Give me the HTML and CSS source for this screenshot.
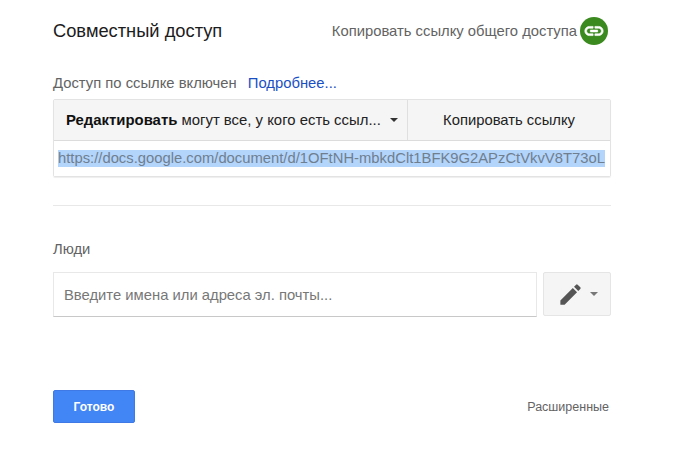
FILE: index.html
```html
<!DOCTYPE html>
<html lang="ru">
<head>
<meta charset="utf-8">
<title>Совместный доступ</title>
<link rel="stylesheet" href="styles.css">
</head>
<body>
<main class="dialog">
  <header class="head">
    <h1 class="title">Совместный доступ</h1>
    <div class="share">
      <span class="share-text">Копировать ссылку общего доступа</span>
      <span class="share-icon">
        <svg viewBox="0 0 24 24" width="22" height="22"><path fill="#fff" stroke="#fff" stroke-width="0.7" d="M3.9 12c0-1.71 1.39-3.1 3.1-3.1h4V7H7c-2.76 0-5 2.24-5 5s2.24 5 5 5h4v-1.9H7c-1.71 0-3.1-1.39-3.1-3.1zM8 13h8v-2H8v2zm9-6h-4v1.9h4c1.71 0 3.1 1.39 3.1 3.1s-1.39 3.1-3.1 3.1h-4V17h4c2.76 0 5-2.24 5-5s-2.24-5-5-5z"/></svg>
      </span>
    </div>
  </header>

  <p class="status">Доступ по ссылке включен <a class="more" href="#">Подробнее...</a></p>

  <section class="linkbox">
    <div class="linkrow">
      <div class="perm">
        <span class="perm-text"><b>Редактировать</b> могут все, у кого есть ссыл...</span>
        <span class="caret caret-dark"></span>
      </div>
      <div class="copy">Копировать ссылку</div>
    </div>
    <div class="urlrow"><span class="url">https://docs.google.com/document/d/1OFtNH-mbkdClt1BFK9G2APzCtVkvV8T73oL</span></div>
  </section>

  <hr class="rule">

  <h2 class="people">Люди</h2>
  <div class="invite">
    <div class="email">Введите имена или адреса эл. почты...</div>
    <div class="role">
      <svg viewBox="0 0 24 24" width="27" height="27"><path fill="#555" d="M3 17.25V21h3.75L17.81 9.94l-3.75-3.75L3 17.25zM20.71 7.04a1 1 0 0 0 0-1.41l-2.34-2.34a1 1 0 0 0-1.41 0l-1.83 1.83 3.75 3.75 1.83-1.83z"/></svg>
      <span class="caret caret-gray"></span>
    </div>
  </div>

  <footer class="foot">
    <button class="done" type="button">Готово</button>
    <span class="advanced">Расширенные</span>
  </footer>
</main>
</body>
</html>
```

FILE: styles.css
```css
* { box-sizing: border-box; }
html, body { margin: 0; padding: 0; background: #fff; }
body { width: 695px; height: 462px; overflow: hidden; font-family: "Liberation Sans", Arial, sans-serif; }
.dialog { width: 558px; margin-left: 53px; padding-top: 17px; display: flex; flex-direction: column; }
.head { display: flex; justify-content: space-between; align-items: center; height: 28px; }
.title { margin: 0; font-size: 18.3px; font-weight: 400; color: #1c1c1c; }
.share { display: flex; align-items: center; gap: 3px; margin-right: 3px; }
.share-text { font-size: 14.8px; color: #636363; }
.share-icon { width: 28px; height: 28px; border-radius: 50%; background: #3b8a1f; display: flex; align-items: center; justify-content: center; }
.status { margin: 30px 0 0; height: 17px; line-height: 17px; font-size: 14.8px; color: #636363; }
.more { color: #1a4fc4; text-decoration: none; margin-left: 7px; }
.linkbox { margin-top: 7px; border: 1px solid #e3e3e3; border-radius: 2px; box-shadow: 0 1px 1px #eee; }
.linkrow { display: flex; height: 41px; border-bottom: 1px solid #dcdcdc; background: #f5f5f5; }
.perm { width: 354px; display: flex; align-items: center; padding-left: 12px; border-right: 1px solid #dfdfdf; }
.perm-text { font-size: 14.9px; color: #222; white-space: nowrap; }
.perm-text b { color: #111; }
.caret { display: inline-block; width: 0; height: 0; border-left: 4px solid transparent; border-right: 4px solid transparent; }
.caret-dark { border-top: 4px solid #333; margin-left: 9px; }
.caret-gray { border-top: 4px solid #777; margin-left: 6px; }
.copy { flex: 1; display: flex; align-items: center; justify-content: center; font-size: 14.8px; color: #222; }
.urlrow { height: 35px; padding: 9px 0 0 4px; background: #fff; }
.url { display: inline-block; height: 17px; line-height: 17px; max-width: 548px; overflow: hidden; white-space: nowrap; font-size: 14.8px; color: #6f7f8f; background: #b3d4fb; }
.rule { margin: 28px 0 0; border: 0; border-top: 1px solid #e8e8e8; }
.people { margin: 35px 0 0; height: 17px; line-height: 17px; font-size: 14.8px; font-weight: 400; color: #636363; }
.invite { display: flex; justify-content: space-between; margin-top: 14px; }
.email { width: 484px; height: 45px; padding-left: 10px; display: flex; align-items: center; font-size: 14.8px; color: #777; background: #fff; border: 1px solid #e8e8e8; border-bottom: 1px solid #c8c8c8; }
.role { width: 68px; height: 44px; display: flex; align-items: center; justify-content: center; background: #f5f5f5; border: 1px solid #e5e5e5; border-radius: 2px; }
.foot { display: flex; justify-content: space-between; align-items: center; margin-top: 73px; }
.done { width: 82px; height: 33px; padding: 0; border: 1px solid #3f79e6; border-radius: 2px; background: #4285f4; color: #fff; font: 700 12px "Liberation Sans", Arial, sans-serif; }
.advanced { font-size: 12.5px; color: #636363; margin-right: 2px; }
```
